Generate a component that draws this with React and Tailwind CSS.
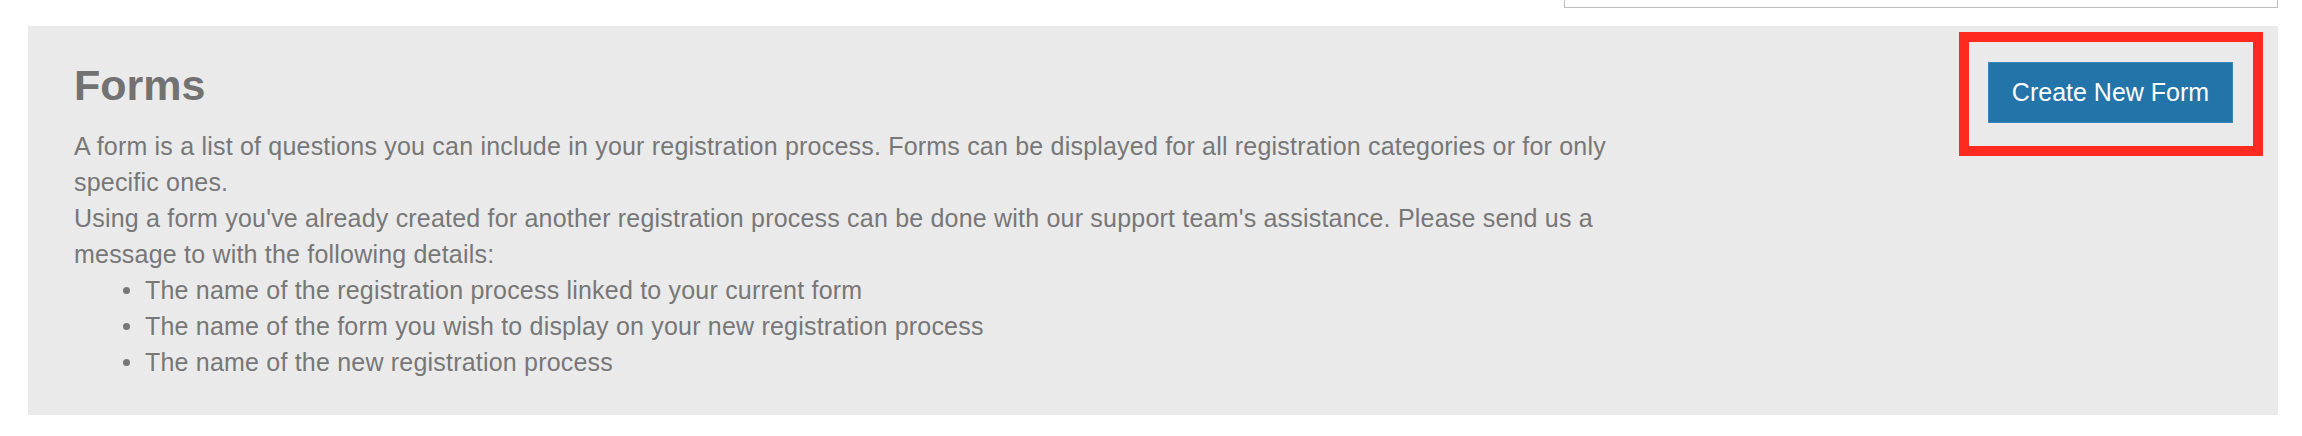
import React from "react";

const details = [
  "The name of the registration process linked to your current form",
  "The name of the form you wish to display on your new registration process",
  "The name of the new registration process",
];

const App = () => {
  return (
    <div
      className="w-[2302px] h-[436px] bg-white overflow-hidden"
      style={{ fontFamily: '"Liberation Sans", Arial, Helvetica, sans-serif' }}
    >
      {/* search field above, cut off */}
      <div className="h-[8px] flex">
        <div className="ml-[1564px] w-[714px] h-[8px] border-x border-b border-[#bdbdbd] bg-white"></div>
      </div>

      {/* Forms panel */}
      <div className="mt-[18px] ml-[28px] mr-[24px] bg-[#eaeaea] flex justify-between items-start pl-[46px] pr-[15px] pt-[6px] pb-[35px]">
        <div className="pt-[27px] text-[#777777]">
          <h1 className="text-[43px] leading-[52px] font-bold text-[#727272]">Forms</h1>
          <div className="mt-[17px] text-[25px] tracking-[0.2px] leading-[36px] whitespace-nowrap">
            <p>
              A form is a list of questions you can include in your registration process. Forms can be displayed for all registration categories or for only
              <br />
              specific ones.
            </p>
            <p>
              Using a form you've already created for another registration process can be done with our support team's assistance. Please send us a
              <br />
              message to with the following details:
            </p>
            <ul className="pl-[49px]">
              {details.map((d) => (
                <li key={d} className="flex items-center gap-[15px]">
                  <span className="w-[7px] h-[7px] rounded-full bg-[#777777] shrink-0"></span>
                  <span>{d}</span>
                </li>
              ))}
            </ul>
          </div>
        </div>

        {/* highlighted button */}
        <div className="border-[10px] border-[#ff2a1f] pl-[19px] pr-[20px] pt-[20px] pb-[23px]">
          <button
            type="button"
            className="w-[245px] h-[61px] bg-[#2274a9] border border-[#3a86bb] text-white text-[25px] flex items-center justify-center"
          >
            Create New Form
          </button>
        </div>
      </div>
    </div>
  );
};

export default App;
